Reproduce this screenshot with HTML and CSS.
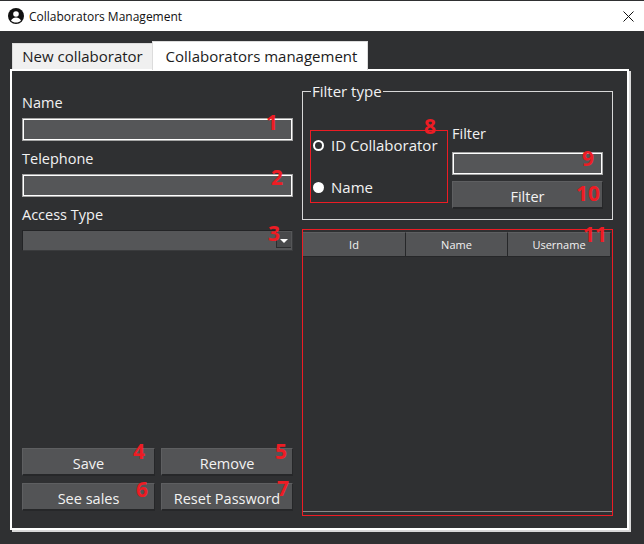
FILE: index.html
```html
<html>
    <head>
        <link rel="stylesheet" href="styles.css">
    </head>
    <body>
        <div class="window">
            <div class="titlebar">
                <svg class="app-icon" width="16" height="16" viewBox="0 0 16 16">
                    <circle cx="8" cy="8" r="8" fill="#111"/>
                    <circle cx="8" cy="6" r="2.8" fill="#fff"/>
                    <path d="M3 12.4c1-2 3-3 5-3s4 1 5 3c-1.300 1.400-3 2.200-5 2.200s-3.700-.8-5-2.200z" fill="#fff"/>
                </svg>
                <span class="title">Collaborators Management</span>
                <svg class="close" width="11" height="11" viewBox="0 0 11 11">
                    <path d="M.5.5l10 10M10.500.5l-10 10" stroke="#111" stroke-width="1" fill="none"/>
                </svg>
            </div>

            <div class="tabs">
                <div class="tab">New collaborator</div>
                <div class="tab active">Collaborators management</div>
            </div>

            <div class="panel">
                <div class="left">
                    <label>Name</label>
                    <div class="input"></div>
                    <label class="next">Telephone</label>
                    <div class="input"></div>
                    <label class="next">Access Type</label>
                    <div class="combo">
                        <div class="combo-arrow"><span></span></div>
                    </div>
                    <div class="actions">
                        <button>Save</button>
                        <button>Remove</button>
                        <button>See sales</button>
                        <button>Reset Password</button>
                    </div>
                </div>

                <div class="right">
                    <fieldset class="group">
                        <legend>Filter type</legend>
                        <div class="radios">
                            <div class="radio"><span class="dot checked"></span>ID Collaborator</div>
                            <div class="radio"><span class="dot"></span>Name</div>
                        </div>
                        <div class="filter">
                            <label>Filter</label>
                            <div class="input"></div>
                            <button>Filter</button>
                        </div>
                    </fieldset>

                    <div class="table">
                        <div class="thead">
                            <div>Id</div>
                            <div>Name</div>
                            <div>Username</div>
                        </div>
                        <div class="tbody"></div>
                    </div>
                </div>
            </div>

            <span class="mark m1">1</span>
            <span class="mark m2">2</span>
            <span class="mark m3">3</span>
            <span class="mark m4">4</span>
            <span class="mark m5">5</span>
            <span class="mark m6">6</span>
            <span class="mark m7">7</span>
            <span class="mark m8">8</span>
            <span class="mark m9">9</span>
            <span class="mark m10">10</span>
            <span class="mark m11">11</span>
        </div>
    </body>
</html>
```

FILE: styles.css
```css
* {
    box-sizing: border-box;
}
body {
    margin: 0;
    font-family: "Open Sans", "Noto Sans", sans-serif;
    background-color: #2f3032;
    color: #f2f2f2;
}
.window {
    position: relative;
    width: 644px;
    height: 544px;
    overflow: hidden;
    border-top: 1px solid #2f3032;
}
.titlebar {
    display: flex;
    align-items: center;
    height: 30px;
    padding: 0 10px 0 8px;
    background-color: #fff;
    color: #111;
}
.app-icon {
    margin-right: 5px;
}
.title {
    font-size: 12px;
    flex: 1;
}
.tabs {
    display: flex;
    align-items: flex-end;
    height: 38px;
    padding-left: 12px;
}
.tab {
    height: 26px;
    width: 140px;
    background-color: #f0f0f0;
    color: #1c1c1c;
    border-top: 1px solid #dcdcdc;
    border-left: 1px solid #dcdcdc;
    font-size: 15px;
    line-height: 25px;
    text-align: center;
}
.tab.active {
    position: relative;
    z-index: 1;
    width: 216px;
    height: 29px;
    margin-bottom: -1px;
    padding-left: 3px;
    background-color: #fff;
    border-right: 1px solid #ddd;
    line-height: 28px;
}
.panel {
    display: grid;
    grid-template-columns: 271px 311px;
    column-gap: 9px;
    width: 619px;
    height: 461px;
    margin-left: 10px;
    padding: 0 0 12px 10px;
    border: 2px solid #fff;
    box-shadow: 2px 2px 0 #d9d9d9;
}
label {
    display: block;
    height: 20px;
    margin-bottom: 5px;
    font-size: 14.500px;
    line-height: 20px;
}
label.next {
    margin-top: 8px;
}
.left {
    display: flex;
    flex-direction: column;
    padding-top: 22px;
}
.input {
    height: 23px;
    background-color: #555658;
    border: 1px solid #a5a5a5;
    box-shadow: inset 0 0 0 1px #fff;
}
.combo {
    display: flex;
    justify-content: flex-end;
    height: 21px;
    padding: 1px 1px 2px;
    background-color: #555658;
    border: 1px solid #3a3b3d;
    border-top-color: #232426;
    border-left-color: #232426;
}
.combo-arrow {
    display: flex;
    align-items: flex-end;
    justify-content: center;
    width: 15px;
    padding-bottom: 4px;
    background-color: #48494b;
    border-left: 1px solid #2c2d2f;
    border-bottom: 1px solid #2c2d2f;
}
.combo-arrow span {
    border-top: 4px solid #fff;
    border-left: 4px solid transparent;
    border-right: 4px solid transparent;
}
button {
    height: 28px;
    padding: 3px 0 0;
    background-color: #535456;
    color: #f2f2f2;
    font-family: inherit;
    font-size: 14.500px;
    border: 1px solid #5e5f61;
    border-right-color: #262729;
    border-bottom-color: #262729;
    border-bottom-width: 2px;
}
.actions {
    display: grid;
    grid-template-columns: 133px 132px;
    column-gap: 6px;
    row-gap: 7px;
    margin: auto 0 5px;
}
.right {
    display: flex;
    flex-direction: column;
    padding-top: 10px;
    min-height: 0;
}
.group {
    display: flex;
    width: 310px;
    margin: 0;
    padding: 23px 9px 10px 7px;
    border: 1px solid #d8d8d8;
}
.group legend {
    height: 20px;
    margin-left: 1px;
    padding: 0 1px;
    font-size: 15px;
    line-height: 20px;
}
.radios {
    display: flex;
    flex-direction: column;
    justify-content: space-between;
    width: 138px;
    height: 73px;
    margin: 6px 4px 0 0;
    padding: 4px 0 5px 2px;
    border: 1px solid #ed1c24;
}
.radio {
    display: flex;
    align-items: center;
    height: 20px;
    font-size: 15px;
}
.dot {
    width: 11px;
    height: 11px;
    margin-right: 7px;
    background-color: #fff;
    border-radius: 50%;
}
.dot.checked {
    background-color: #2f3032;
    border: 2px solid #fff;
}
.filter {
    display: flex;
    flex-direction: column;
    width: 151px;
}
.filter label {
    margin-bottom: 8px;
}
.filter button {
    margin-top: 6px;
}
.table {
    display: flex;
    flex-direction: column;
    flex: 1;
    margin-top: 9px;
    padding: 2px 0 3px 0;
    border: 1px solid #ed1c24;
}
.thead {
    display: grid;
    grid-template-columns: 103px 102px 103px;
    height: 24px;
}
.thead div {
    background-color: #535456;
    border-right: 1px solid #262729;
    border-bottom: 1px solid #262729;
    border-top: 1px solid #5e5f61;
    font-size: 11px;
    line-height: 23px;
    text-align: center;
}
.tbody {
    flex: 1;
    border-bottom: 1px solid #8a8a8a;
}
.mark {
    position: absolute;
    color: #ed1c24;
    font-size: 21px;
    font-weight: 700;
    line-height: 20px;
}
.m1 { left: 266px; top: 111px; }
.m2 { left: 271px; top: 166px; }
.m3 { left: 268px; top: 222px; }
.m4 { left: 133px; top: 440px; }
.m5 { left: 275px; top: 440px; }
.m6 { left: 136px; top: 478px; }
.m7 { left: 277px; top: 477px; }
.m8 { left: 424px; top: 115px; }
.m9 { left: 582px; top: 147px; }
.m10 { left: 576px; top: 182px; }
.m11 { left: 583px; top: 223px; }
```
